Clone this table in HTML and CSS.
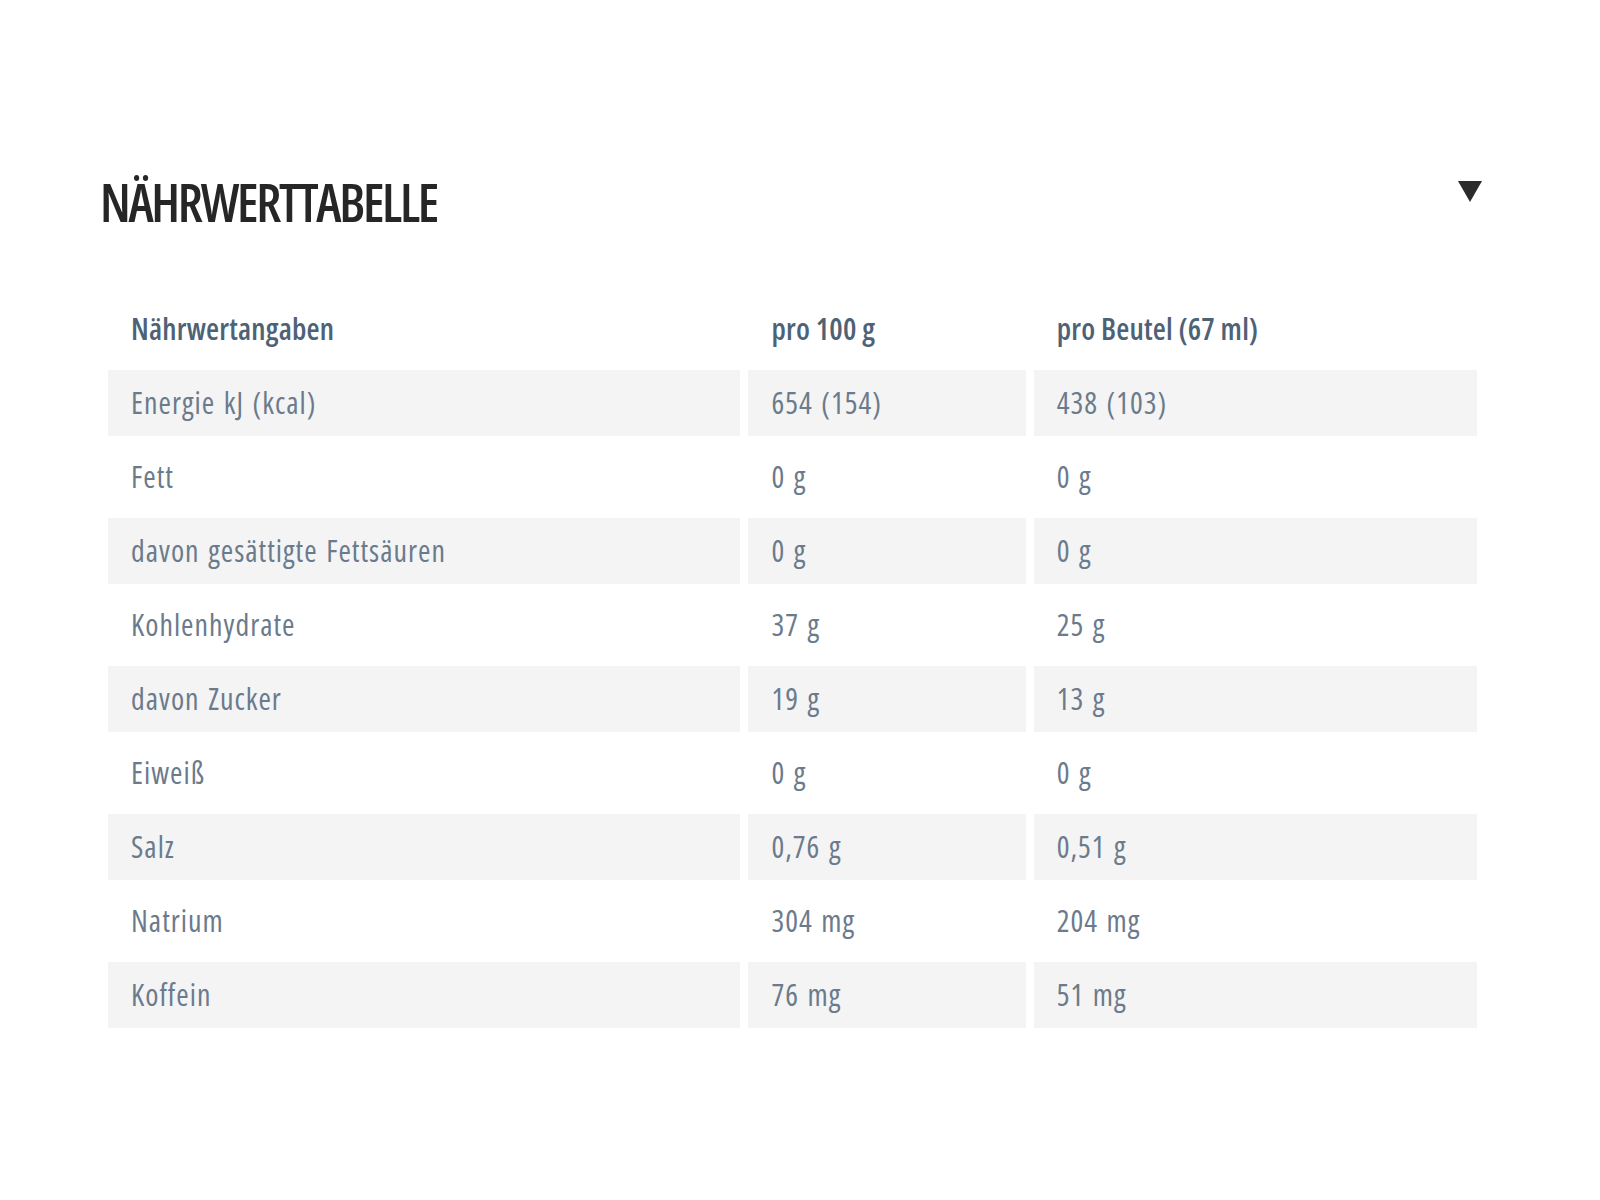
FILE: index.html
```html
<!DOCTYPE html>
<html lang="de">
<head>
<meta charset="utf-8">
<title>Nährwerttabelle</title>
<link rel="stylesheet" href="styles.css">
</head>
<body>
<section class="panel">
  <header class="panel-head">
    <h2 class="panel-title">NÄHRWERTTABELLE</h2>
    <span class="toggle" aria-hidden="true"></span>
  </header>
  <table class="nutri">
    <colgroup>
      <col class="c1"><col class="c2"><col class="c3">
    </colgroup>
    <thead>
      <tr><th>Nährwertangaben</th><th>pro 100 g</th><th>pro Beutel (67 ml)</th></tr>
    </thead>
    <tbody>
      <tr class="alt"><td>Energie kJ (kcal)</td><td>654 (154)</td><td>438 (103)</td></tr>
      <tr><td>Fett</td><td>0 g</td><td>0 g</td></tr>
      <tr class="alt"><td>davon gesättigte Fettsäuren</td><td>0 g</td><td>0 g</td></tr>
      <tr><td>Kohlenhydrate</td><td>37 g</td><td>25 g</td></tr>
      <tr class="alt"><td>davon Zucker</td><td>19 g</td><td>13 g</td></tr>
      <tr><td>Eiweiß</td><td>0 g</td><td>0 g</td></tr>
      <tr class="alt"><td>Salz</td><td>0,76 g</td><td>0,51 g</td></tr>
      <tr><td>Natrium</td><td>304 mg</td><td>204 mg</td></tr>
      <tr class="alt"><td>Koffein</td><td>76 mg</td><td>51 mg</td></tr>
    </tbody>
  </table>
</section>
</body>
</html>
```
FILE: styles.css
```css
html, body {
  margin: 0;
  padding: 0;
  background: #ffffff;
}
body {
  font-family: "Open Sans", "Roboto", sans-serif;
  font-stretch: 75%;
}
.panel {
  width: 1385px;
  margin: 0 0 0 100px;
  padding-top: 166px;
}
.panel-head {
  display: flex;
  justify-content: space-between;
  align-items: flex-start;
  height: 122px;
}
.panel-title {
  margin: 0;
  font-size: 52px;
  line-height: 72px;
  font-weight: 600;
  font-stretch: 75%;
  letter-spacing: -2.3px;
  color: #262626;
}
.toggle {
  width: 0;
  height: 0;
  margin-top: 15px;
  margin-right: 3px;
  border-left: 12px solid transparent;
  border-right: 12px solid transparent;
  border-top: 21px solid #2b2b2b;
}
.nutri {
  width: 1385px;
  table-layout: fixed;
  border-collapse: separate;
  border-spacing: 8px;
  margin: 0;
}
.c1 { width: 632px; }
.c2 { width: 277px; }
.c3 { width: 443px; }
.nutri th,
.nutri td {
  height: 66px;
  padding: 0 0 0 23px;
  box-sizing: border-box;
  text-align: left;
  vertical-align: middle;
  font-size: 30px;
  line-height: 36px;
  white-space: nowrap;
}
.nutri th {
  font-weight: 600;
  font-stretch: 75%;
  letter-spacing: 0.2px;
  color: #4e6276;
}
.nutri td {
  font-weight: 400;
  font-stretch: 75%;
  letter-spacing: 1px;
  word-spacing: 2px;
  color: #6b7b8c;
}
.nutri tr.alt td {
  background: #f4f4f4;
}
```
